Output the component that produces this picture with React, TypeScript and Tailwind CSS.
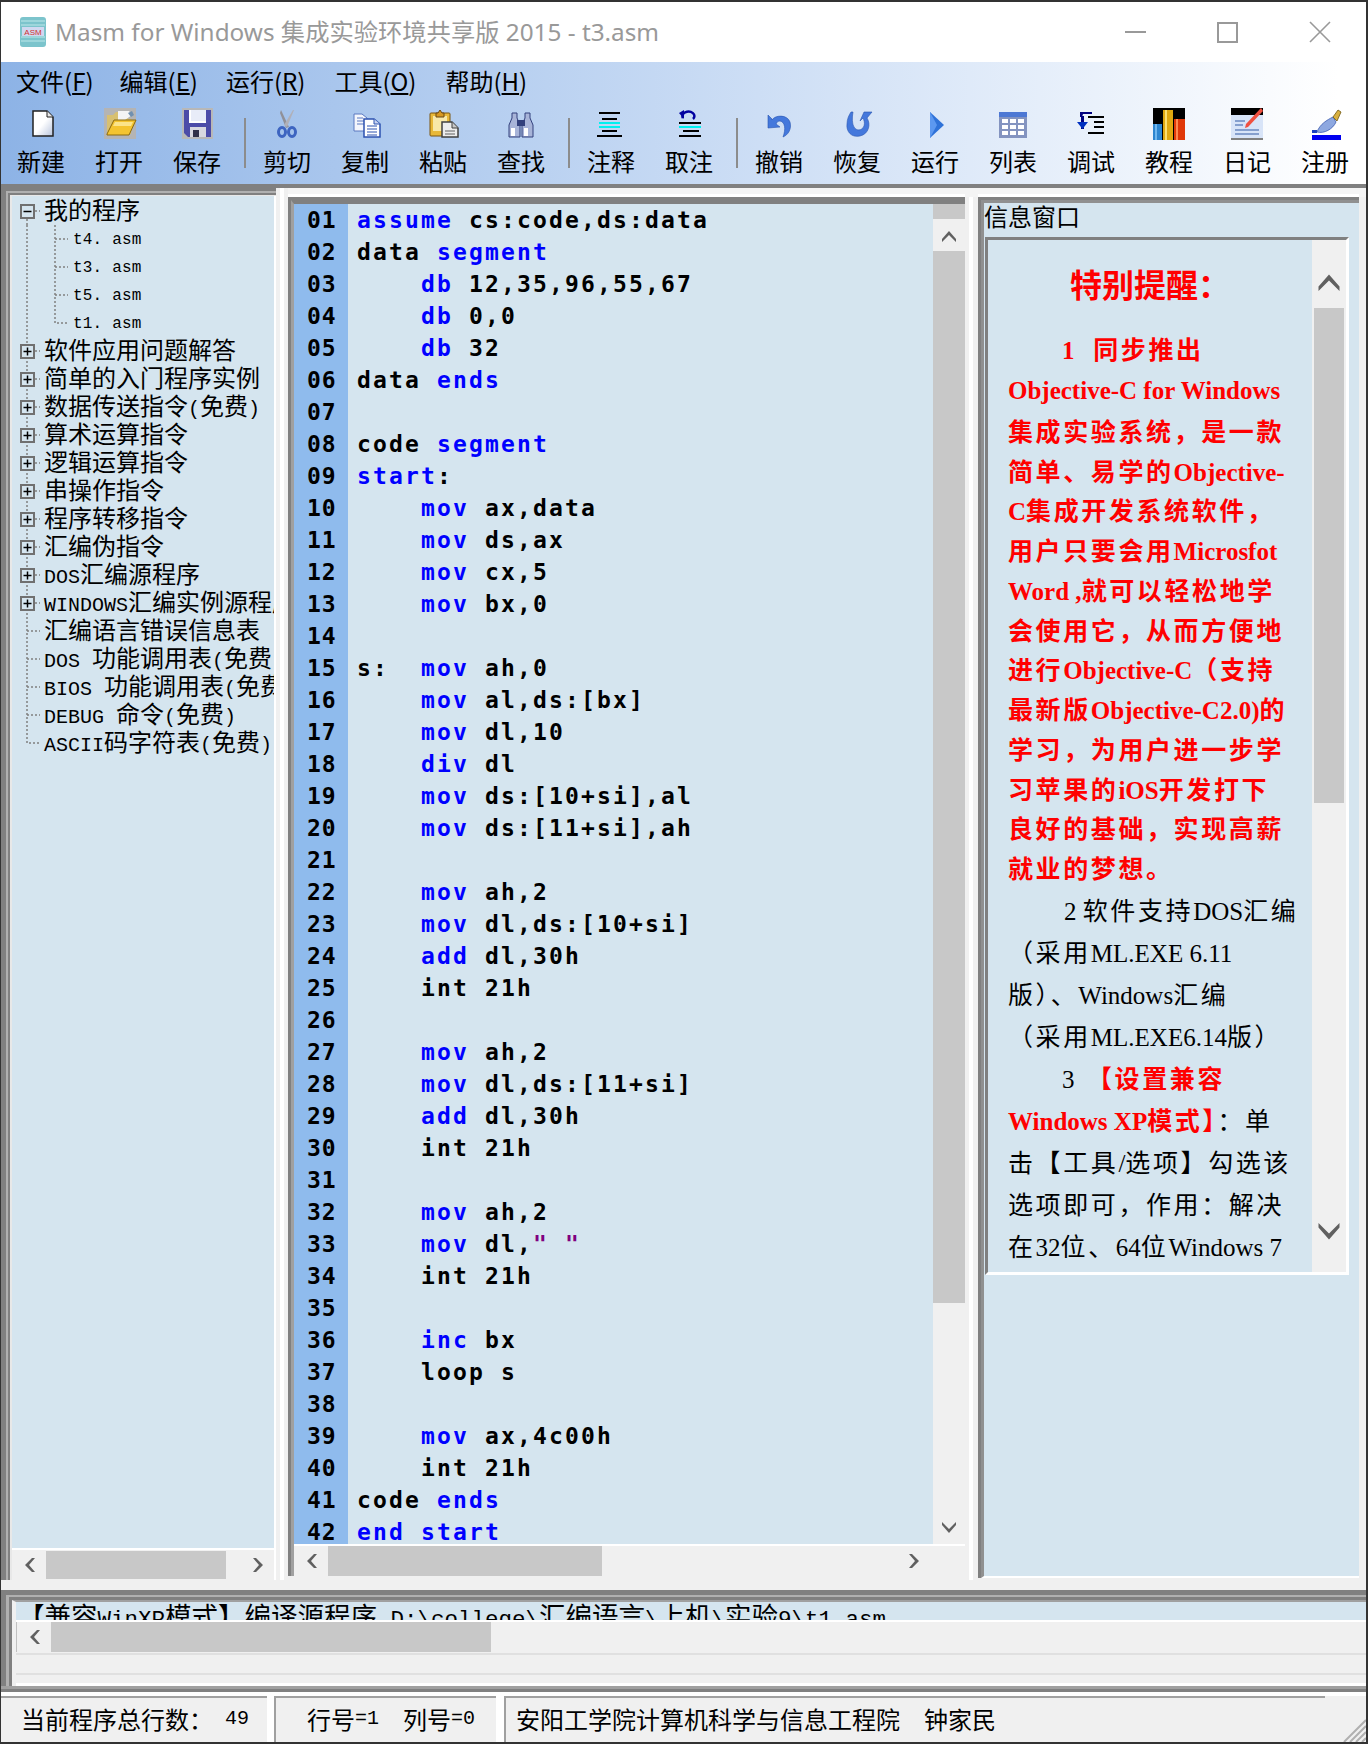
import React from 'react';

const CJK = "font-['Noto_Sans_CJK_SC',sans-serif]";

// full width punctuation, kept as escapes so it does not get normalised to ascii
const COMMA = '\uFF0C';
const COLON = '\uFF1A';
const LP = '\uFF08';
const RP = '\uFF09';

// ascii runs are narrower than the CJK glyphs in this old GDI font
function Mixed({ text, big }: { text: string; big?: boolean }) {
  const parts = text.match(/[\x20-\x7e]+|[^\x20-\x7e]+/g) || [];
  return (
    <>
      {parts.map((p, i) =>
        /^[\x20-\x7e]/.test(p) ? (
          <span
            key={i}
            className={`font-['Liberation_Mono',monospace] whitespace-pre ${big ? 'text-[22.5px]' : 'text-[20px]'}`}
          >
            {p}
          </span>
        ) : (
          <span key={i} className={`${CJK} ${big ? 'text-[26.5px]' : 'text-[24px]'}`}>
            {p}
          </span>
        ),
      )}
    </>
  );
}

function Chevron({ dir, size = 16 }: { dir: 'up' | 'down' | 'left' | 'right'; size?: number }) {
  const pts = {
    up: '1,11 8,3 15,11 15,14 8,7 1,14',
    down: '1,2 8,9 15,2 15,5 8,13 1,5',
    left: '11,1 4,8 11,15 14,15 8,8 14,1',
    right: '5,1 12,8 5,15 2,15 8,8 2,1',
  }[dir];
  return (
    <svg width={size} height={size} viewBox="0 0 16 16" className="flex-none">
      <polygon points={pts} fill="#606060" />
    </svg>
  );
}

function Ic({ children }: { children: React.ReactNode }) {
  return (
    <svg width="36" height="34" viewBox="0 0 36 34" className="flex-none">
      {children}
    </svg>
  );
}

const icons: Record<string, React.ReactNode> = {
  new: (
    <Ic>
      <defs>
        <linearGradient id="doc" x1="0" y1="0" x2="1" y2="1">
          <stop offset="0.5" stopColor="#ffffff" />
          <stop offset="1" stopColor="#b8c4dc" />
        </linearGradient>
      </defs>
      <path d="M10 4H24L30 10V29H10Z" fill="url(#doc)" stroke="#222" strokeWidth="1.5" />
      <path d="M24 4V10H30" fill="#e8e8e8" stroke="#222" strokeWidth="1" />
    </Ic>
  ),
  open: (
    <Ic>
      <rect x="3" y="1" width="32" height="31" fill="#b4b4b4" />
      <path d="M6 8H12L15 5H27V12H30V27H6Z" fill="#d8c070" />
      <path d="M17 4H28L31 8L24 13H17Z" fill="#f4f4f4" />
      <path d="M31 4L33 8L30 10L27 6Z" fill="#7090b0" />
      <path d="M6 27L13 13H35L28 28H6Z" fill="#f4c430" stroke="#8a6a10" strokeWidth="1" />
      <path d="M14 15H32L30 19H12Z" fill="#fbe48a" />
    </Ic>
  ),
  save: (
    <Ic>
      <rect x="3" y="1" width="31" height="31" fill="#b8b8b8" />
      <path d="M5 3H32V30H9L5 26Z" fill="#4c4ca8" />
      <rect x="10" y="3" width="17" height="13" fill="#ffffff" />
      <rect x="12" y="3" width="15" height="11" fill="#e8ecf8" />
      <rect x="11" y="20" width="16" height="10" fill="#d8d8e0" />
      <rect x="14" y="23" width="6" height="7" fill="#303048" />
    </Ic>
  ),
  cut: (
    <Ic>
      <path d="M12 3L20 20L17 21L11 6Z" fill="#909098" />
      <path d="M25 3L18 20L15 18L24 3Z" fill="#b0b0b8" />
      <ellipse cx="13" cy="25" rx="3.5" ry="4.5" fill="none" stroke="#3d64c0" strokeWidth="3" />
      <ellipse cx="23" cy="25" rx="3.5" ry="4.5" fill="none" stroke="#3d64c0" strokeWidth="3" />
    </Ic>
  ),
  copy: (
    <Ic>
      <path d="M7 7H15L20 11V24H7Z" fill="#f4f6fc" stroke="#5a78c0" strokeWidth="1" />
      <path d="M10 11H16M10 14H17M10 17H17" stroke="#5a78c0" strokeWidth="1" />
      <path d="M17 12H27L33 17V30H17Z" fill="#ffffff" stroke="#2d52b0" strokeWidth="1.5" />
      <path d="M27 12V17H33" fill="#c8d4f0" stroke="#2d52b0" strokeWidth="1" />
      <path d="M20 19H30M20 22H30M20 25H30M20 28H30" stroke="#2d52b0" strokeWidth="1" />
    </Ic>
  ),
  paste: (
    <Ic>
      <rect x="5" y="6" width="20" height="23" rx="1" fill="#e8b838" stroke="#7a5510" strokeWidth="1" />
      <rect x="8" y="9" width="14" height="15" fill="#f8e8a8" />
      <path d="M11 6H13L15 3L17 6H19V10H11Z" fill="#d89820" stroke="#6a4810" strokeWidth="1" />
      <path d="M17 15H27L33 21V30H17Z" fill="#ececec" stroke="#404040" strokeWidth="1.5" />
      <path d="M27 15V21H33" fill="#c8c8c8" stroke="#404040" strokeWidth="1" />
      <path d="M20 24H30M20 27H30" stroke="#606060" strokeWidth="1" />
    </Ic>
  ),
  find: (
    <Ic>
      <path d="M9 6H14V11L17 18V30H6V18L9 11Z" fill="#a8b4d8" stroke="#32407c" strokeWidth="1" />
      <path d="M22 6H27V11L30 18V30H19V18L22 11Z" fill="#a8b4d8" stroke="#32407c" strokeWidth="1" />
      <rect x="14" y="13" width="8" height="6" fill="#32407c" />
      <rect x="8" y="21" width="4" height="8" fill="#ffffff" />
      <rect x="21" y="21" width="4" height="8" fill="#ffffff" />
    </Ic>
  ),
  note: (
    <Ic>
      <rect x="6" y="5" width="21" height="2" fill="#000" />
      <rect x="6" y="15" width="21" height="2" fill="#00f0f0" />
      <rect x="6" y="19" width="21" height="2" fill="#00f0f0" />
      <rect x="9" y="11" width="15" height="2" fill="#000" />
      <rect x="9" y="23" width="15" height="2" fill="#000" />
      <rect x="4" y="28" width="25" height="2" fill="#000" />
    </Ic>
  ),
  unnote: (
    <Ic>
      <path d="M12 11A6 4.5 0 1 1 22 12" fill="none" stroke="#0000a0" strokeWidth="2.5" />
      <path d="M8 6L13 3V12Z" fill="#0000a0" />
      <rect x="8" y="15" width="22" height="2" fill="#000" />
      <rect x="8" y="19" width="22" height="2" fill="#00f0f0" />
      <rect x="12" y="23" width="16" height="2" fill="#000" />
      <rect x="8" y="28" width="22" height="2" fill="#000" />
    </Ic>
  ),
  undo: (
    <Ic>
      <path d="M11 13C14 8 26 7 29 15C31 22 27 28 22 30C25 22 24 15 19 14C17 14 16 15 15 17L19 20L7 21L7 8L11 12Z" fill="#4478dc" stroke="#2a56b0" strokeWidth="0.6" />
    </Ic>
  ),
  redo: (
    <Ic>
      <path d="M25 5L33 5L28 11C32 17 30 27 21 29C12 31 7 24 8 17C8 12 10 8 12 5L14 5C13 10 13 17 15 20C17 24 23 24 25 19C26 16 25 13 24 11L21 14Z" fill="#4478dc" stroke="#2a56b0" strokeWidth="0.6" />
    </Ic>
  ),
  run: (
    <Ic>
      <path d="M13 5L27 18L13 31Z" fill="#2f72d8" />
      <path d="M13 5L20 18L13 31Z" fill="#5c98f0" />
    </Ic>
  ),
  list: (
    <Ic>
      <rect x="4" y="5" width="28" height="26" fill="#8494c0" />
      <rect x="4" y="5" width="28" height="5" fill="#4d78d4" />
      <path d="M7 12H13V16H7ZM15 12H21V16H15ZM23 12H29V16H23ZM7 18H13V22H7ZM15 18H21V22H15ZM23 18H29V22H23ZM7 24H13V28H7ZM15 24H21V28H15ZM23 24H29V28H23Z" fill="#ffffff" />
    </Ic>
  ),
  debug: (
    <Ic>
      <path d="M7 5H19V7H10L9 10H7Z" fill="#000080" />
      <rect x="8" y="9" width="3" height="13" fill="#000080" />
      <path d="M4 15H15L9.5 22Z" fill="#0030c0" />
      <path d="M15 10H31M21 15H31M21 20H31M15 26H31" stroke="#000" strokeWidth="2" />
    </Ic>
  ),
  book: (
    <Ic>
      <rect x="2" y="1" width="32" height="32" fill="#000" />
      <rect x="2" y="17" width="9" height="16" fill="#2e86d0" />
      <rect x="4" y="17" width="2" height="16" fill="#70b8f0" />
      <rect x="12" y="3" width="10" height="30" fill="#e0a810" />
      <rect x="14" y="3" width="2" height="30" fill="#fce070" />
      <rect x="23" y="12" width="11" height="21" fill="#e03808" />
      <rect x="25" y="12" width="2" height="21" fill="#ff8850" />
    </Ic>
  ),
  diary: (
    <Ic>
      <rect x="2" y="1" width="32" height="32" fill="#000" />
      <rect x="2" y="8" width="32" height="25" fill="#d8e4f8" />
      <rect x="2" y="31" width="32" height="2" fill="#808080" />
      <path d="M6 14H16M6 18H14M6 23H30M6 27H30" stroke="#6a88c0" strokeWidth="1.5" />
      <path d="M32 1L34 4L19 20L16 21L17 17Z" fill="#f05040" />
    </Ic>
  ),
  reg: (
    <Ic>
      <rect x="5" y="28" width="29" height="5" fill="#0000f0" />
      <path d="M5 23H10V26H5Z" fill="#1840c0" />
      <path d="M10 25C13 17 20 13 26 10L29 15C26 22 17 27 10 25Z" fill="#8ea8e0" stroke="#3c5cb0" strokeWidth="0.8" />
      <path d="M26 10L31 3L34 5L30 14Z" fill="#d8b040" stroke="#705810" strokeWidth="0.8" />
    </Ic>
  ),
};

function ToolBtn({ icon, label }: { icon: string; label: string }) {
  return (
    <div className="w-[78px] flex-none flex flex-col items-center">
      <div className="h-[34px] flex items-center justify-center">{icons[icon]}</div>
      <div className={`${CJK} text-[24px] leading-[32px] mt-[4px] text-black`}>{label}</div>
    </div>
  );
}

function Sep() {
  return (
    <div className="w-[12px] flex-none flex justify-end pr-[2px] pt-[11px]">
      <div className="w-[2px] h-[50px] bg-[#8c8c8c]" />
    </div>
  );
}

function TitleBar() {
  return (
    <div className="h-[60px] flex-none bg-white flex items-center">
      <svg width="28" height="32" viewBox="0 0 28 32" className="ml-[18px] flex-none">
        <rect x="1" y="1" width="26" height="30" rx="3" fill="#7cc4cc" />
        <path d="M2 5H26M2 9H26M2 21H26M2 25H26" stroke="#a8dce0" strokeWidth="1.5" />
        <rect x="3" y="11" width="22" height="9" fill="#d0d8f0" />
        <text x="14" y="19" textAnchor="middle" fontSize="8" fill="#d03030" fontFamily="Liberation Sans">
          ASM
        </text>
      </svg>
      <div className="ml-[8px] text-[24.3px] text-[#999999] font-['Noto_Sans','Noto_Sans_CJK_SC',sans-serif] whitespace-pre">
        Masm for Windows 集成实验环境共享版 2015 - t3.asm
      </div>
      <div className="ml-auto flex">
        <div className="w-[92px] h-[60px] flex items-center justify-center">
          <div className="w-[21px] h-[2px] bg-[#999999]" />
        </div>
        <div className="w-[92px] h-[60px] flex items-center justify-center">
          <div className="w-[21px] h-[21px] border-2 border-[#999999]" />
        </div>
        <div className="w-[93px] h-[60px] flex items-center justify-center">
          <svg width="22" height="22" viewBox="0 0 22 22">
            <path d="M1 1L21 21M21 1L1 21" stroke="#999999" strokeWidth="1.6" />
          </svg>
        </div>
      </div>
    </div>
  );
}

const menus: [string, string, number][] = [
  ['文件', 'F', 0],
  ['编辑', 'E', 26],
  ['运行', 'R', 28],
  ['工具', 'O', 29],
  ['帮助', 'H', 29],
];

function MenuAndTools() {
  return (
    <div className="h-[122px] flex-none bg-gradient-to-r from-[#8db3e6] to-white to-[98%]">
      <div className="h-[38px] flex items-center pl-[15px]">
        {menus.map(([name, key, gap]) => (
          <div key={key} style={{ marginLeft: gap }} className={`${CJK} text-[24px] text-black whitespace-pre`}>
            {name}(<span className="underline">{key}</span>)
          </div>
        ))}
      </div>
      <div className="flex pl-[1px] pt-[7px]">
        <ToolBtn icon="new" label="新建" />
        <ToolBtn icon="open" label="打开" />
        <ToolBtn icon="save" label="保存" />
        <Sep />
        <ToolBtn icon="cut" label="剪切" />
        <ToolBtn icon="copy" label="复制" />
        <ToolBtn icon="paste" label="粘贴" />
        <ToolBtn icon="find" label="查找" />
        <Sep />
        <ToolBtn icon="note" label="注释" />
        <ToolBtn icon="unnote" label="取注" />
        <Sep />
        <ToolBtn icon="undo" label="撤销" />
        <ToolBtn icon="redo" label="恢复" />
        <ToolBtn icon="run" label="运行" />
        <ToolBtn icon="list" label="列表" />
        <ToolBtn icon="debug" label="调试" />
        <ToolBtn icon="book" label="教程" />
        <ToolBtn icon="diary" label="日记" />
        <ToolBtn icon="reg" label="注册" />
      </div>
    </div>
  );
}

type Row = { text: string; kind: 'root' | 'child' | 'plus' | 'leaf'; last?: boolean };

const treeRows: Row[] = [
  { text: '我的程序', kind: 'root' },
  { text: 't4. asm', kind: 'child' },
  { text: 't3. asm', kind: 'child' },
  { text: 't5. asm', kind: 'child' },
  { text: 't1. asm', kind: 'child', last: true },
  { text: '软件应用问题解答', kind: 'plus' },
  { text: '简单的入门程序实例', kind: 'plus' },
  { text: '数据传送指令(免费)', kind: 'plus' },
  { text: '算术运算指令', kind: 'plus' },
  { text: '逻辑运算指令', kind: 'plus' },
  { text: '串操作指令', kind: 'plus' },
  { text: '程序转移指令', kind: 'plus' },
  { text: '汇编伪指令', kind: 'plus' },
  { text: 'DOS汇编源程序', kind: 'plus' },
  { text: 'WINDOWS汇编实例源程序', kind: 'plus' },
  { text: '汇编语言错误信息表', kind: 'leaf' },
  { text: 'DOS 功能调用表(免费)', kind: 'leaf' },
  { text: 'BIOS 功能调用表(免费)', kind: 'leaf' },
  { text: 'DEBUG 命令(免费)', kind: 'leaf' },
  { text: 'ASCII码字符表(免费)', kind: 'leaf', last: true },
];

function TreeGlyph({ row, first }: { row: Row; first: boolean }) {
  const dot = { stroke: '#808080', strokeWidth: 1.5, strokeDasharray: '2 2' };
  if (row.kind === 'child') {
    return (
      <svg width="61" height="28" viewBox="0 0 61 28" className="flex-none">
        <path d="M15 0V28" {...dot} />
        <path d={row.last ? 'M43 0V14H56' : 'M43 0V28M43 14H56'} {...dot} fill="none" />
      </svg>
    );
  }
  const box = row.kind === 'root' || row.kind === 'plus';
  return (
    <svg width="32" height="28" viewBox="0 0 32 28" className="flex-none">
      <path d={row.last ? 'M15 0V14H28' : first ? 'M15 14V28M15 14H28' : 'M15 0V28M15 14H28'} {...dot} fill="none" />
      {box && (
        <>
          <rect x="9" y="8" width="13" height="13" fill="#d5e5ef" stroke="#707070" strokeWidth="2" />
          <path d="M11.5 14.5H19.5" stroke="#000" strokeWidth="1.5" />
          {row.kind === 'plus' && <path d="M15.5 10.5V18.5" stroke="#000" strokeWidth="1.5" />}
        </>
      )}
    </svg>
  );
}

function TreePane() {
  return (
    <div className="w-[264px] flex-none flex flex-col bg-white">
      <div className="h-[1352px] bg-[#d5e5ef] overflow-hidden mr-[2px] pt-[1px]">
        {treeRows.map((r, i) => (
          <div key={r.text} className="h-[28px] flex items-center whitespace-nowrap overflow-hidden">
            <TreeGlyph row={r} first={i === 0} />
            {r.kind === 'child' ? (
              <span className="mt-[2px] font-['Liberation_Mono',monospace] text-[16px] tracking-[0.2px] text-black whitespace-pre">
                {r.text}
              </span>
            ) : (
              <span className="text-black leading-[28px]">
                <Mixed text={r.text} />
              </span>
            )}
          </div>
        ))}
      </div>
      <div className="h-[2px] bg-white" />
      <div className="h-[30px] bg-[#f0f0f0] mr-[2px] flex items-center">
        <div className="w-[34px] flex-none flex justify-center">
          <Chevron dir="left" />
        </div>
        <div className="w-[180px] h-[28px] flex-none bg-[#c8c8c8]" />
        <div className="flex-1 flex justify-end pr-[7px]">
          <Chevron dir="right" />
        </div>
      </div>
    </div>
  );
}

const code = `assume cs:code,ds:data
data segment
    db 12,35,96,55,67
    db 0,0
    db 32
data ends

code segment
start:
    mov ax,data
    mov ds,ax
    mov cx,5
    mov bx,0

s:  mov ah,0
    mov al,ds:[bx]
    mov dl,10
    div dl
    mov ds:[10+si],al
    mov ds:[11+si],ah

    mov ah,2
    mov dl,ds:[10+si]
    add dl,30h
    int 21h

    mov ah,2
    mov dl,ds:[11+si]
    add dl,30h
    int 21h

    mov ah,2
    mov dl," "
    int 21h

    inc bx
    loop s

    mov ax,4c00h
    int 21h
code ends
end start`.split('\n');

function CodeLine({ line }: { line: string }) {
  const parts = line.split(/(\b(?:assume|segment|ends|db|mov|start|div|add|inc|end)\b|" ")/);
  return (
    <>
      {parts.map((p, i) => {
        if (p === '" "') return <span key={i} className="text-[#800080]">{p}</span>;
        if (i % 2 === 1) return <span key={i} className="text-[#0000ff]">{p}</span>;
        return <span key={i}>{p}</span>;
      })}
    </>
  );
}

function EditorPane() {
  return (
    <div className="w-[671px] flex-none flex flex-col">
      <div className="flex h-[1340px]">
        <div className="w-[639px] flex-none overflow-hidden bg-[#d5e5ef] flex">
          <div className="w-[54px] flex-none bg-[#8fbbed] pl-[13px]">
            {code.map((_, i) => (
              <div
                key={i}
                className="h-[32px] leading-[32px] font-['DejaVu_Sans_Mono',monospace] font-bold text-[23px] tracking-[1px] text-black"
              >
                {String(i + 1).padStart(2, '0')}
              </div>
            ))}
          </div>
          <div className="pl-[9px] font-['DejaVu_Sans_Mono',monospace] font-bold text-[23px] tracking-[2.15px] text-black whitespace-pre">
            {code.map((l, i) => (
              <div key={i} className="h-[32px] leading-[32px]">
                <CodeLine line={l} />
              </div>
            ))}
          </div>
        </div>
        <div className="w-[32px] flex-none bg-[#f0f0f0] flex flex-col items-center">
          <div className="h-[15px] w-full bg-[#c8c8c8] flex-none" />
          <div className="h-[32px] flex-none flex items-end justify-center pb-[7px]">
            <Chevron dir="up" />
          </div>
          <div className="h-[1052px] w-full flex-none bg-[#c8c8c8]" />
          <div className="flex-1 flex items-end pb-[8px]">
            <Chevron dir="down" />
          </div>
        </div>
      </div>
      <div className="h-[2px] bg-white" />
      <div className="h-[30px] bg-[#f0f0f0] flex items-center">
        <div className="w-[34px] flex-none flex justify-center">
          <Chevron dir="left" />
        </div>
        <div className="w-[274px] h-[30px] flex-none bg-[#c8c8c8]" />
        <div className="w-[321px] flex-none flex justify-end">
          <Chevron dir="right" />
        </div>
      </div>
    </div>
  );
}

function Rich({ text, bold, red, size = 25 }: { text: string; bold?: boolean; red?: boolean; size?: number }) {
  const parts = text.match(/[\x20-\x7e]+|[^\x20-\x7e]+/g) || [];
  return (
    <span className={`${bold ? 'font-bold' : 'font-normal'} ${red ? 'text-[#ff0000]' : 'text-black'} whitespace-pre`}>
      {parts.map((p, i) =>
        /^[\x20-\x7e]/.test(p) ? (
          <span key={i} className="font-['Liberation_Serif',serif] text-[25px]">
            {p}
          </span>
        ) : (
          <span key={i} style={{ fontSize: size }} className={`${CJK} tracking-[2.6px]`}>
            {p}
          </span>
        ),
      )}
    </span>
  );
}

const redLines = [
  'Objective-C for Windows',
  `集成实验系统${COMMA}是一款`,
  '简单、易学的Objective-',
  `C集成开发系统软件${COMMA}`,
  '用户只要会用Microsfot',
  'Word ,就可以轻松地学',
  `会使用它${COMMA}从而方便地`,
  `进行Objective-C${LP}支持`,
  '最新版Objective-C2.0)的',
  `学习${COMMA}为用户进一步学`,
  '习苹果的iOS开发打下',
  `良好的基础${COMMA}实现高薪`,
  '就业的梦想。',
];

function InfoPane() {
  return (
    <div className="w-[375px] h-full flex-none bg-[#d5e5ef] flex flex-col">
      <div className="h-[34px] flex-none flex items-start">
        <div className={`${CJK} text-[24px] leading-[26px] text-black`}>信息窗口</div>
      </div>
      <div className="h-[1038px] w-[364px] flex-none ml-[1px] border-t-[3px] border-l-[3px] border-[#808080] border-b-[3px] border-b-white border-r-[3px] border-r-white flex">
        <div className="w-[324px] flex-none bg-[#d5e5ef] overflow-hidden pl-[20px]">
          <div className={`mt-[15px] h-[56px] leading-[56px] text-center pr-[20px] ${CJK} text-[32px] font-bold text-[#ff0000]`}>
            特别提醒{COLON}
          </div>
          <div className="mt-[14px] h-[46px] leading-[46px] pl-[54px]">
            <Rich text="1   " bold red />
            <Rich text="同步推出" bold red />
          </div>
          {redLines.map((l) => (
            <div key={l} className="h-[39.75px] leading-[39.75px] whitespace-nowrap">
              <Rich text={l} bold red />
            </div>
          ))}
          <div className="h-[42px] leading-[42px] pl-[56px] whitespace-nowrap">
            <Rich text="2 软件支持DOS汇编" />
          </div>
          <div className="h-[42px] leading-[42px] whitespace-nowrap">
            <Rich text={`${LP}采用ML.EXE 6.11`} />
          </div>
          <div className="h-[42px] leading-[42px] whitespace-nowrap">
            <Rich text={`版${RP}、Windows汇编`} />
          </div>
          <div className="h-[42px] leading-[42px] whitespace-nowrap">
            <Rich text={`${LP}采用ML.EXE6.14版${RP}`} />
          </div>
          <div className="h-[42px] leading-[42px] pl-[54px] whitespace-nowrap">
            <Rich text="3 " />
            <Rich text=" 【设置兼容" bold red />
          </div>
          <div className="h-[42px] leading-[42px] whitespace-nowrap">
            <Rich text="Windows XP模式】" bold red />
            <Rich text={`${COLON}单`} />
          </div>
          <div className="h-[42px] leading-[42px] whitespace-nowrap">
            <Rich text="击【工具/选项】勾选该" />
          </div>
          <div className="h-[42px] leading-[42px] whitespace-nowrap">
            <Rich text={`选项即可${COMMA}作用${COLON}解决`} />
          </div>
          <div className="h-[42px] leading-[42px] whitespace-nowrap">
            <Rich text="在32位、64位Windows 7" />
          </div>
        </div>
        <div className="flex-1 bg-[#f0f0f0] flex flex-col items-center">
          <div className="h-[68px] flex-none flex items-end justify-center pb-[14px]">
            <Chevron dir="up" size={24} />
          </div>
          <div className="h-[495px] w-[30px] flex-none bg-[#c8c8c8]" />
          <div className="flex-1 flex items-end pb-[28px]">
            <Chevron dir="down" size={24} />
          </div>
        </div>
      </div>
    </div>
  );
}

function MainArea() {
  return (
    <div className="flex-none">
      <div className="h-[4px] bg-[#808080]" />
      <div className="flex h-[1402px]">
        {/* left pane with its stacked sunken frame */}
        <div className="border-l-[5px] border-t-[3px] border-[#808080] h-[1392px]">
          <div className="border-l-[2px] border-t-[2px] border-[#b0b0b0] h-full">
            <div className="border-l-[2px] border-t-[2px] border-[#808080] h-full">
              <div className="border-l-[2px] border-t-[1px] border-[#e8e8e8] h-full flex">
                <TreePane />
              </div>
            </div>
          </div>
        </div>
        <div className="w-[12px] flex-none flex h-[1392px]">
          <div className="w-[4px] bg-[#f0f0f0]" />
          <div className="w-[4px] bg-white" />
          <div className="w-[4px] bg-[#f0f0f0]" />
        </div>
        {/* editor */}
        <div className="flex-none">
          <div className="h-[9px] bg-[#f4f4f4] border-b-[3px] border-white" />
          <div className="border-l-[3px] border-t-[3px] border-[#808080]">
            <div className="border-l-[3px] border-t-[4px] border-[#a0a0a0] border-t-[#808080]">
              <EditorPane />
            </div>
          </div>
        </div>
        <div className="w-[13px] flex-none flex flex-col h-[1392px]">
          <div className="h-[9px] bg-[#f4f4f4] flex-none" />
          <div className="flex flex-1">
            <div className="w-[4px] bg-[#f0f0f0]" />
            <div className="w-[4px] bg-white" />
            <div className="w-[5px] bg-[#f0f0f0]" />
          </div>
        </div>
        {/* info pane */}
        <div className="flex-none">
          <div className="h-[9px] bg-[#f4f4f4] border-b-[3px] border-white" />
          <div className="border-l-[3px] border-t-[3px] border-[#808080] h-[1381px]">
            <div className="border-l-[3px] border-t-[3px] border-[#909090] h-full border-b-[2px] border-b-white">
              <InfoPane />
            </div>
          </div>
        </div>
        <div className="flex-1 flex flex-col bg-[#f0f0f0]">
          <div className="h-[9px] bg-[#f4f4f4]" />
        </div>
      </div>
    </div>
  );
}

function OutputArea() {
  return (
    <div className="h-[106px] flex-none bg-[#f0f0f0]">
      <div className="h-[5px] bg-[#808080]" />
      <div className="border-l-[5px] border-[#808080]">
        <div className="border-l-[3px] border-t-[2px] border-[#b0b0b0]">
          <div className="border-l-[3px] border-t-[3px] border-[#808080]">
            <div className="border-l-[4px] border-t-[2px] border-[#f0f0f0] border-t-[#a0a0a0]">
              <div className="h-[18px] bg-[#d5e5ef] overflow-hidden pl-[2px]">
                <div className="leading-[36px] -mt-[5px] text-black whitespace-pre">
                  <Mixed big text="【兼容WinXP模式】编译源程序 D:\college\汇编语言\上机\实验9\t1.asm" />
                </div>
              </div>
              <div className="h-[2px] bg-white" />
              <div className="h-[30px] flex items-center border-l-[1px] border-[#c0c0c0]">
                <div className="w-[34px] flex-none flex justify-center">
                  <Chevron dir="left" />
                </div>
                <div className="w-[440px] h-[30px] flex-none bg-[#c8c8c8]" />
              </div>
              <div className="h-[3px] border-b-[2px] border-[#e0e0e0]" />
              <div className="h-[20px] border-b-[2px] border-[#e0e0e0]" />
              <div className="h-[11px] border-b-[3px] border-white" />
              <div className="h-[3px] bg-[#a0a0a0] -ml-[16px]" />
              <div className="h-[3px] bg-[#808080] -ml-[16px]" />
            </div>
          </div>
        </div>
      </div>
      <div className="h-[4px] bg-white" />
    </div>
  );
}

function StatusBar() {
  return (
    <div className="flex-1 flex bg-white">
      <div className="w-[266px] flex-none bg-[#f0f0f0] border-t-2 border-[#a0a0a0] pl-[20px] pb-[3px] flex items-center text-black whitespace-pre">
        <Mixed text={`当前程序总行数${COLON} 49`} />
      </div>
      <div className="w-[222px] flex-none ml-[7px] bg-[#f0f0f0] border-t-2 border-l-2 border-[#a0a0a0] pl-[31px] pb-[3px] flex items-center text-black whitespace-pre">
        <Mixed text="行号=1  列号=0" />
      </div>
      <div className="w-[821px] flex-none ml-[8px] bg-[#f0f0f0] border-t-2 border-l-2 border-[#a0a0a0] pl-[10px] pb-[3px] flex items-center text-black whitespace-pre">
        <Mixed text="安阳工学院计算机科学与信息工程院  钟家民" />
      </div>
      <div className="flex-1 bg-[#f0f0f0] flex items-end justify-end">
        <svg width="24" height="24" viewBox="0 0 24 24">
          <path d="M24 2L2 24M24 8L8 24M24 14L14 24M24 20L20 24" stroke="#b0b0b0" strokeWidth="2" />
        </svg>
      </div>
    </div>
  );
}

export default function App() {
  return (
    <div className="w-[1368px] h-[1744px] flex flex-col overflow-hidden bg-[#f0f0f0] border-t-2 border-b-2 border-l-[1px] border-r-2 border-[#333333]">
      <TitleBar />
      <MenuAndTools />
      <MainArea />
      <OutputArea />
      <StatusBar />
    </div>
  );
}
